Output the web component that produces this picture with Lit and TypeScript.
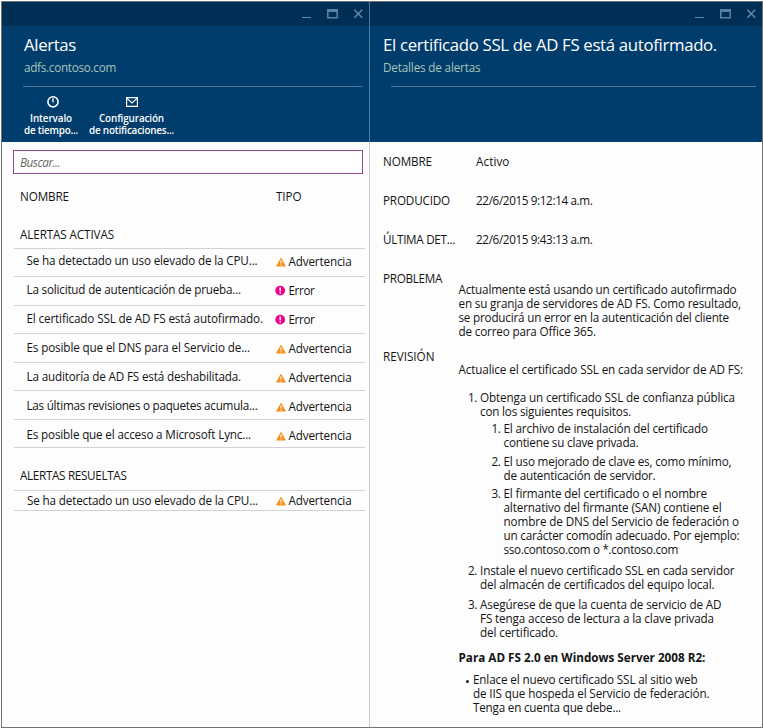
import { LitElement, html, css, svg } from "lit";
import { customElement, property } from "lit/decorators.js";

type Kind = "warning" | "error";
interface Alert { name: string; width: number; kind: Kind; }
type Line = [text: string, width: number];

const ACTIVE: Alert[] = [
  { name: "Se ha detectado un uso elevado de la CPU...", width: 231, kind: "warning" },
  { name: "La solicitud de autenticación de prueba...", width: 214.5, kind: "error" },
  { name: "El certificado SSL de AD FS está autofirmado.", width: 236.5, kind: "error" },
  { name: "Es posible que el DNS para el Servicio de...", width: 223.5, kind: "warning" },
  { name: "La auditoría de AD FS está deshabilitada.", width: 214.5, kind: "warning" },
  { name: "Las últimas revisiones o paquetes acumula...", width: 231, kind: "warning" },
  { name: "Es posible que el acceso a Microsoft Lync...", width: 224.5, kind: "warning" },
];
const RESOLVED: Alert[] = [
  { name: "Se ha detectado un uso elevado de la CPU...", width: 231, kind: "warning" },
];

const PROBLEM: Line[] = [
  ["Actualmente está usando un certificado autofirmado", 278],
  ["en su granja de servidores de AD FS. Como resultado,", 282.5],
  ["se producirá un error en la autenticación del cliente", 270.5],
  ["de correo para Office 365.", 137.5],
];
const STEP_1: Line[] = [
  ["Obtenga un certificado SSL de confianza pública", 255],
  ["con los siguientes requisitos.", 151],
];
const REQUIREMENTS: Line[][] = [
  [["El archivo de instalación del certificado", 204.5], ["contiene su clave privada.", 135]],
  [["El uso mejorado de clave es, como mínimo,", 228], ["de autenticación de servidor.", 152]],
  [
    ["El firmante del certificado o el nombre", 203.5],
    ["alternativo del firmante (SAN) contiene el", 218],
    ["nombre de DNS del Servicio de federación o", 235.5],
    ["un carácter comodín adecuado. Por ejemplo:", 236],
    ["sso.contoso.com o *.contoso.com", 174.5],
  ],
];
const STEP_2: Line[] = [
  ["Instale el nuevo certificado SSL en cada servidor", 254.5],
  ["del almacén de certificados del equipo local.", 234.5],
];
const STEP_3: Line[] = [
  ["Asegúrese de que la cuenta de servicio de AD", 241.5],
  ["FS tenga acceso de lectura a la clave privada", 234],
  ["del certificado.", 78],
];
const BULLET: Line[] = [
  ["Enlace el nuevo certificado SSL al sitio web", 224.5],
  ["de IIS que hospeda el Servicio de federación.", 236.5],
  ["Tenga en cuenta que debe...", 148],
];

/** One line of text, tracked so that it fills the given width. */
@customElement("fit-line")
export class FitLine extends LitElement {
  @property() text = "";
  @property({ type: Number }) width = 0;

  static styles = css`
    :host { display: block; white-space: nowrap; }
    .run { letter-spacing: var(--track, 0); }
  `;

  updated() {
    const run = this.renderRoot.querySelector<HTMLElement>(".run")!;
    this.style.setProperty("--track", "0.001px");
    const natural = run.getBoundingClientRect().width;
    this.style.setProperty("--track", `${(this.width - natural) / this.text.length}px`);
  }

  render() {
    return html`<span class="run">${this.text}</span>`;
  }
}

const fit = (text: string, width: number, cls = "") =>
  html`<fit-line class=${cls} .text=${text} .width=${width}></fit-line>`;
const lines = (list: Line[]) => list.map(([t, w]) => fit(t, w));

const ICONS: Record<Kind, unknown> = {
  warning: html`<svg class="kind" width="12" height="12" viewBox="0 0 12 12">
    <path d="M6 1.6 L11 10.4 H1 Z" fill="#f88f1c" />
    <path d="M5.3 4.6 H6.7 L6.4 7.7 H5.6 Z M5.4 8.4 H6.6 V9.6 H5.4 Z" fill="#fff" />
  </svg>`,
  error: html`<svg class="kind" width="12" height="12" viewBox="0 0 12 12">
    <circle cx="5.2" cy="5.6" r="4.9" fill="#ec008c" />
    <path d="M4.4 2.4 H6 L5.8 6.5 H4.6 Z M4.5 7.3 H5.9 V8.7 H4.5 Z" fill="#fff" />
  </svg>`,
};

const windowButtons = html`<svg class="controls" width="62" height="12" viewBox="0 0 62 12">
  ${svg`
    <path d="M0 9.5 H9" stroke="#6488a8" fill="none" />
    <path d="M25 1 H36 V10.5 H25 Z M26.6 4 V9 H34.4 V4 Z" fill="#5b7f9f" fill-rule="evenodd" />
    <path d="M52.3 1.8 L60.2 9.7 M60.2 1.8 L52.3 9.7" stroke="#6488a8" stroke-width="1.5" fill="none" />`}
</svg>`;

@customElement("app-root")
export class AppRoot extends LitElement {
  static styles = css`
    :host {
      display: block;
      box-sizing: border-box;
      width: 763px;
      height: 728px;
      padding: 1px 0 0 1px;
      background: #fff;
      font: 450 11.7px/14px "Open Sans", "Noto Sans", sans-serif;
      color: #141414;
    }
    * { box-sizing: border-box; }
    .frame {
      display: grid;
      grid-template-columns: 368px 1fr;
      height: 727px;
      border: 1px solid #737373;
      background: #fdfdfd;
      overflow: hidden;
    }
    .pane { display: flex; flex-direction: column; min-width: 0; }
    .list { border-right: 1px solid #ccc; }
    .list > .bar, .list > .head { margin-right: -1px; border-right: 1px solid #55799b; }
    .bar {
      flex: none;
      height: 24px;
      background: #002f55;
      display: flex;
      justify-content: flex-end;
      padding: 6px 5px 0 0;
    }
    .controls { display: block; }
    .head { flex: none; height: 116px; background: #003c6c; padding: 8px 7px 0 22px; }
    .detail .head { padding: 8px 6px 0 13px; }
    .title { font-size: 16.8px; font-weight: 400; line-height: 22px; color: #fff; }
    .sub { margin-top: 4px; color: #a8c6b9; }
    .rule { height: 1px; background: #4d7699; margin-top: 12px; }
    .list .rule { margin-left: -1px; }
    .detail .rule { margin-left: 8px; }
    .tools { display: flex; gap: 11px; padding-top: 8px; }
    .tool {
      display: flex;
      flex-direction: column;
      align-items: center;
      font-size: 9.9px;
      line-height: 12px;
      font-weight: 600;
      color: #fff;
    }
    .tool svg { display: block; margin-bottom: 3px; }
    .tool .clock { margin-left: 4px; }
    .tool .mail { margin-left: 1px; }
    .search {
      flex: none;
      width: 350px;
      height: 24px;
      margin: 8px 0 0 11px;
      padding: 0 6px 1px;
      border: 1px solid #954b97;
      outline: 0;
      background: #fff;
      font: italic 11.7px/14px "Open Sans", sans-serif;
      letter-spacing: -0.45px;
    }
    .search::placeholder { color: #666; opacity: 1; }
    .columns { display: flex; margin: 15px 0 0 18px; }
    .columns > :first-child { width: 256px; }
    .group { margin: 24px 0 7px 18px; }
    .rows { margin: 0 4px 0 12px; border-top: 1px solid #d2d2d2; }
    .row {
      display: flex;
      height: 28.43px;
      padding: calc(4px + var(--index) * 0.58px) 0 0 12.5px;
      border-bottom: 1px solid #d2d2d2;
    }
    .row > :first-child { width: 248.5px; }
    .kind { flex: none; margin-top: 3px; }
    .row .type { margin: 1px 0 0 1.5px; }
    .resolved { margin-top: 20px; margin-bottom: 8px; }
    .short .row { height: 20px; padding: 2px 0 0 13px; }
    .short .row > :first-child { width: 248px; }
    .short .type { margin-top: 0; }
    .short .kind { margin-top: 2px; }
    .facts { padding: 12px 0 0 13px; }
    .fact { display: grid; grid-template-columns: 93px 1fr; height: 39px; }
    .fact.wide { grid-template-columns: 75.5px 1fr; height: 78px; }
    .problem { padding-top: 11px; }
    .review { padding-top: 13px; }
    ol, ul { list-style: none; margin: 0; padding: 0; }
    .steps { margin-top: 14px; padding-left: 9.5px; }
    .steps > li, .reqs > li { display: flex; }
    .num { flex: none; width: 12px; letter-spacing: -0.4px; }
    .steps > li + li { margin-top: 6px; }
    .steps > li:nth-child(2) { margin-top: 7px; }
    .reqs { margin: 3px 0 0 11.5px; }
    .reqs > li + li { margin-top: 4px; }
    .reqs > li:nth-child(2) { margin-top: 5px; }
    .note { font-weight: 700; margin-top: 11px; }
    .bullets { margin-top: 8px; padding-left: 7px; }
    .bullets li { display: flex; gap: 4.5px; }
    .dot { flex: none; width: 3px; height: 3px; border-radius: 50%; margin-top: 8px; background: #1c1c1c; }
  `;

  private row(a: Alert, index: number) {
    return html`<div class="row" style="--index: ${index}">
      ${fit(a.name, a.width)}${ICONS[a.kind]}
      ${a.kind === "warning" ? fit("Advertencia", 63, "type") : fit("Error", 26, "type")}
    </div>`;
  }

  private step(n: number, body: unknown) {
    return html`<li><span class="num">${n}.</span><div>${body}</div></li>`;
  }

  render() {
    return html`<div class="frame">
      <section class="pane list">
        <div class="bar">${windowButtons}</div>
        <header class="head">
          ${fit("Alertas", 52, "title")}
          ${fit("adfs.contoso.com", 92, "sub")}
          <div class="rule"></div>
          <div class="tools">
            <div class="tool">
              <svg class="clock" width="14" height="14" viewBox="0 0 14 14" fill="none" stroke="#fff" stroke-width="1.6">
                <circle cx="7" cy="6.8" r="5.1" /><path d="M7 3.3 V7.4" stroke-width="1.3" />
              </svg>
              ${fit("Intervalo", 42)}${fit("de tiempo...", 54)}
            </div>
            <div class="tool">
              <svg class="mail" width="14" height="14" viewBox="0 0 14 14" fill="none" stroke="#fff">
                <path d="M1.6 2.6 H12.4 V11.4 H1.6 Z" stroke-width="1.2" />
                <path d="M2 3.4 L7 8 L12 3.4" stroke-width="1.2" />
              </svg>
              ${fit("Configuración", 65)}${fit("de notificaciones...", 85)}
            </div>
          </div>
        </header>
        <input class="search" placeholder="Buscar..." />
        <div class="columns">${fit("NOMBRE", 49)}${fit("TIPO", 25.5)}</div>
        ${fit("ALERTAS ACTIVAS", 94, "group")}
        <div class="rows">${ACTIVE.map((a, i) => this.row(a, i))}</div>
        ${fit("ALERTAS RESUELTAS", 106.5, "group resolved")}
        <div class="rows short">${RESOLVED.map((a, i) => this.row(a, i))}</div>
      </section>
      <section class="pane detail">
        <div class="bar">${windowButtons}</div>
        <header class="head">
          ${fit("El certificado SSL de AD FS está autofirmado.", 334, "title")}
          ${fit("Detalles de alertas", 97.5, "sub")}
          <div class="rule"></div>
        </header>
        <div class="facts">
          <div class="fact">${fit("NOMBRE", 49)}${fit("Activo", 33.5)}</div>
          <div class="fact">${fit("PRODUCIDO", 67)}${fit("22/6/2015 9:12:14 a.m.", 116.5)}</div>
          <div class="fact">${fit("ÚLTIMA DET...", 72)}${fit("22/6/2015 9:43:13 a.m.", 116.5)}</div>
          <div class="fact wide">
            ${fit("PROBLEMA", 59)}
            <div class="problem">${lines(PROBLEM)}</div>
          </div>
          <div class="fact wide">
            ${fit("REVISIÓN", 51.5)}
            <div class="review">
              ${fit("Actualice el certificado SSL en cada servidor de AD FS:", 284.5)}
              <ol class="steps">
                ${this.step(1, html`${lines(STEP_1)}
                  <ol class="reqs">${REQUIREMENTS.map((r, i) => this.step(i + 1, lines(r)))}</ol>`)}
                ${this.step(2, lines(STEP_2))}
                ${this.step(3, lines(STEP_3))}
              </ol>
              ${fit("Para AD FS 2.0 en Windows Server 2008 R2:", 247, "note")}
              <ul class="bullets"><li><span class="dot"></span><div>${lines(BULLET)}</div></li></ul>
            </div>
          </div>
        </div>
      </section>
    </div>`;
  }
}
